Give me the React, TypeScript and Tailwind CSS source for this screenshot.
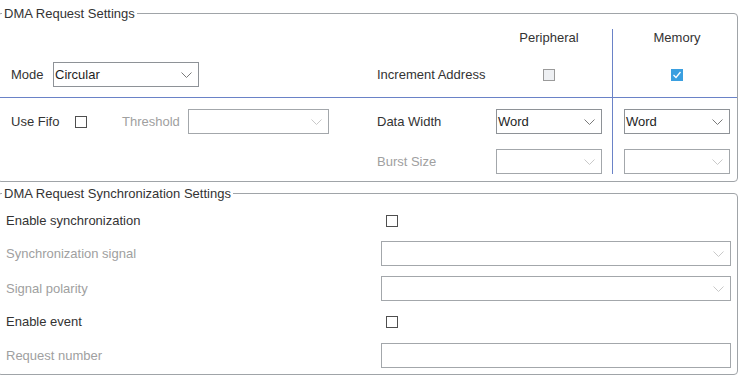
import React from "react";

// small drop-down chevron used inside the combo boxes
const Chevron = ({ disabled }: { disabled?: boolean }) => (
  <svg width="11" height="6" viewBox="0 0 11 6" className="shrink-0">
    <polyline points="0.5,0.5 5.5,5.5 10.5,0.5" fill="none" stroke={disabled ? "#c9c9c9" : "#7a7a7a"} strokeWidth="1" />
  </svg>
);

const Combo = ({ value, disabled, width }: { value?: string; disabled?: boolean; width: string }) => (
  <div className={`flex h-[25px] items-center justify-between border bg-white pl-[1px] pr-[6px] ${disabled ? "border-[#a3a7ab]" : "border-[#8e9297]"} ${width}`}>
    <span className="text-[#1e1e1e]">{value}</span>
    <Chevron disabled={disabled} />
  </div>
);

const Check = ({ state }: { state: "off" | "disabled" | "on" }) => {
  if (state === "on")
    return (
      <div className="flex h-[12px] w-[12px] items-center justify-center bg-[#3a9fe0]">
        <svg width="10" height="10" viewBox="0 0 10 10">
          <polyline points="1.5,5 4,7.5 8.5,2" fill="none" stroke="#fff" strokeWidth="1.3" />
        </svg>
      </div>
    );
  if (state === "disabled") return <div className="h-[12px] w-[12px] border border-[#9a9a9a] bg-[#eef0f3]" />;
  return <div className="h-[12px] w-[12px] border border-[#4f4f4f] bg-white" />;
};

export default function App() {
  return (
    <div className="h-[377px] w-[747px] overflow-hidden bg-white pt-[5px] font-['Liberation_Sans',Arial,sans-serif] text-[13px] text-[#333]">
      {/* DMA Request Settings */}
      <fieldset className="-ml-[3px] w-[741px] rounded-[4px] border border-[#a0a4a8] pb-[7px]">
        <legend className="ml-[4px] px-[2px] leading-[17px]">DMA Request Settings</legend>

        <div className="mt-[7px] flex h-[68px]">
          <div className="w-[492px] pl-[13px] pt-[33px]">
            <div className="flex h-[25px] items-center">
              <span className="w-[42px]">Mode</span>
              <Combo value="Circular" width="w-[146px]" />
              <span className="ml-[178px]">Increment Address</span>
            </div>
          </div>
          <div className="w-[122px] pl-[6px]">
            <div className="flex w-[106px] flex-col items-center">
              <span className="h-[18px] leading-[18px]">Peripheral</span>
              <div className="mt-[15px] flex h-[25px] items-center">
                <Check state="disabled" />
              </div>
            </div>
          </div>
          <div className="w-[124px] border-l border-[#6a82c7] pl-[11px]">
            <div className="flex w-[106px] flex-col items-center">
              <span className="h-[18px] leading-[18px]">Memory</span>
              <div className="mt-[15px] flex h-[25px] items-center">
                <Check state="on" />
              </div>
            </div>
          </div>
        </div>

        <div className="h-px bg-[#6a82c7]" />

        <div className="flex h-[76px]">
          <div className="flex w-[492px] flex-col gap-[15px] pl-[13px] pt-[11px]">
            <div className="flex h-[25px] items-center">
              <span className="w-[64px]">Use Fifo</span>
              <Check state="off" />
              <span className="ml-[35px] w-[66px] text-[#a0a0a0]">Threshold</span>
              <Combo disabled width="w-[141px]" />
              <span className="ml-[48px]">Data Width</span>
            </div>
            <div className="flex h-[25px] items-center">
              <span className="ml-[366px] text-[#a0a0a0]">Burst Size</span>
            </div>
          </div>
          <div className="flex w-[122px] flex-col gap-[15px] pl-[6px] pt-[11px]">
            <Combo value="Word" width="w-[106px]" />
            <Combo disabled width="w-[106px]" />
          </div>
          <div className="flex w-[124px] flex-col gap-[15px] border-l border-[#6a82c7] pl-[11px] pt-[11px]">
            <Combo value="Word" width="w-[106px]" />
            <Combo disabled width="w-[106px]" />
          </div>
        </div>
      </fieldset>

      {/* DMA Request Synchronization Settings */}
      <fieldset className="-ml-[3px] mt-[3px] w-[741px] rounded-[4px] border border-[#a0a4a8] pb-[6px]">
        <legend className="ml-[4px] px-[2px] leading-[17px]">DMA Request Synchronization Settings</legend>
        <div className="flex flex-col pl-[8px] pt-[6px]">
          <div className="flex h-[25px] items-center">
            <span className="w-[375px]">Enable synchronization</span>
            <div className="ml-[5px]">
              <Check state="off" />
            </div>
          </div>
          <div className="mt-[8px] flex h-[25px] items-center">
            <span className="w-[375px] text-[#a0a0a0]">Synchronization signal</span>
            <Combo disabled width="w-[350px]" />
          </div>
          <div className="mt-[10px] flex h-[25px] items-center">
            <span className="w-[375px] text-[#a0a0a0]">Signal polarity</span>
            <Combo disabled width="w-[350px]" />
          </div>
          <div className="mt-[8px] flex h-[25px] items-center">
            <span className="w-[375px]">Enable event</span>
            <div className="ml-[5px]">
              <Check state="off" />
            </div>
          </div>
          <div className="mt-[9px] flex h-[25px] items-center">
            <span className="w-[375px] text-[#a0a0a0]">Request number</span>
            <div className="h-[25px] w-[350px] border border-[#a3a7ab] bg-white" />
          </div>
        </div>
      </fieldset>
    </div>
  );
}
